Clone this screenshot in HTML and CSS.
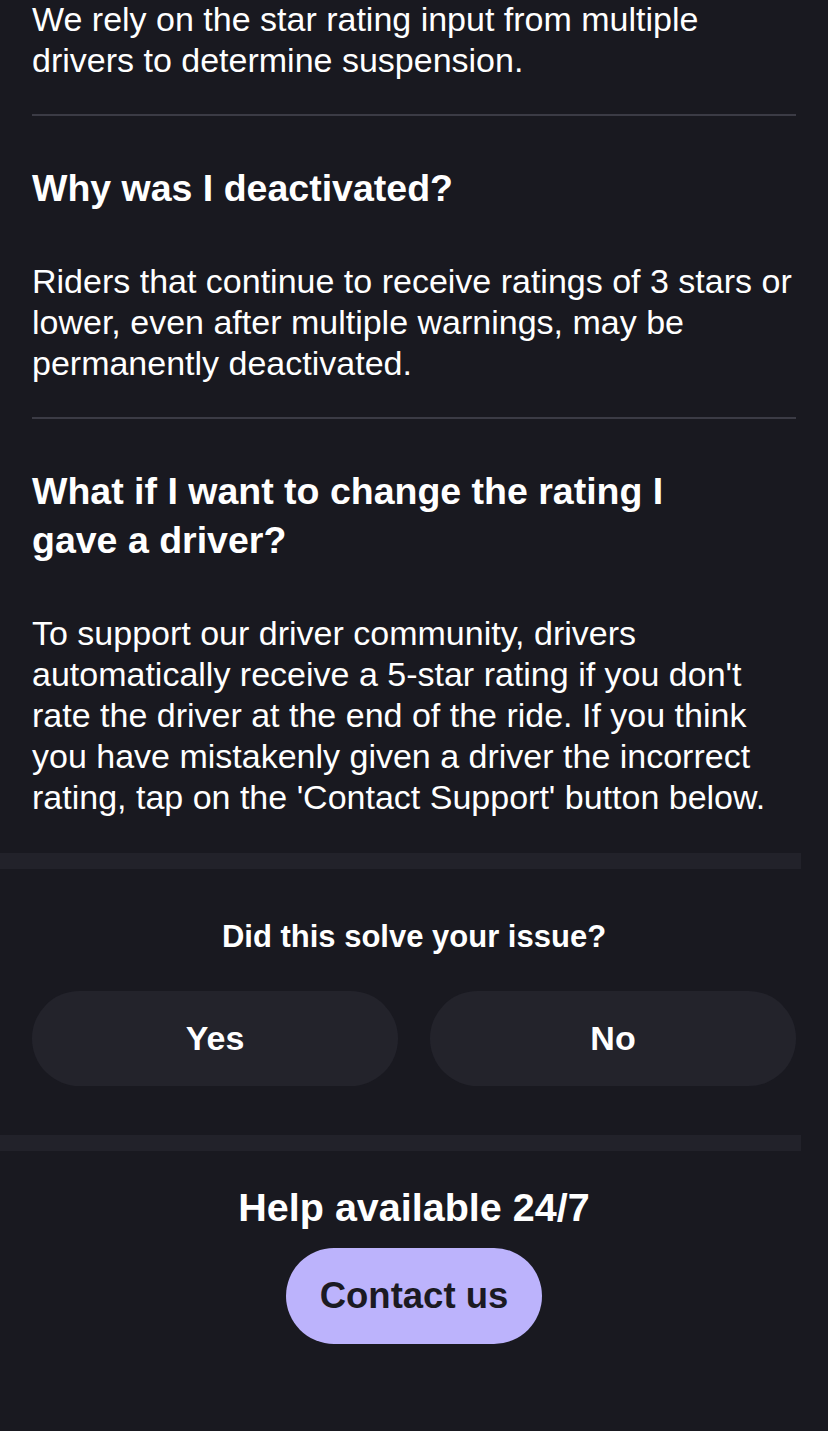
FILE: index.html
```html
<!DOCTYPE html>
<html>
<head>
<meta charset="utf-8">
<link rel="stylesheet" href="styles.css">
</head>
<body>
<main class="page">
  <section class="faq">
    <p class="answer">We rely on the star rating input from multiple drivers to determine suspension.</p>
    <hr class="divider">
    <h2 class="question">Why was I deactivated?</h2>
    <p class="answer">Riders that continue to receive ratings of 3 stars or lower, even after multiple warnings, may be permanently deactivated.</p>
    <hr class="divider">
    <h2 class="question">What if I want to change the rating I gave a driver?</h2>
    <p class="answer">To support our driver community, drivers automatically receive a 5-star rating if you don't rate the driver at the end of the ride. If you think you have mistakenly given a driver the incorrect rating, tap on the 'Contact Support' button below.</p>
  </section>
  <div class="band"></div>
  <section class="feedback">
    <h3 class="feedback-title">Did this solve your issue?</h3>
    <div class="choices">
      <button class="choice">Yes</button>
      <button class="choice">No</button>
    </div>
  </section>
  <div class="band"></div>
  <section class="help">
    <h3 class="help-title">Help available 24/7</h3>
    <button class="contact">Contact us</button>
  </section>
</main>
</body>
</html>
```
FILE: styles.css
```css
html, body {
  margin: 0;
  padding: 0;
  background: #191920;
}
body {
  font-family: "Liberation Sans", Arial, sans-serif;
  color: #ffffff;
}
.page {
  width: 828px;
}
.faq {
  padding: 0 32px 35px;
  margin-top: -1px;
}
.answer {
  margin: 0;
  font-size: 34px;
  line-height: 41px;
  font-weight: 400;
}
.divider {
  border: 0;
  height: 2px;
  background: #3b3b45;
  margin: 33px 0 0;
}
.question {
  margin: 0;
  padding: 48px 48px 48px 0;
  font-size: 37.5px;
  line-height: 49px;
  font-weight: 700;
}
.band {
  width: 801px;
  height: 16px;
  background: #22222a;
}
.feedback {
  padding: 48px 32px 49px;
}
.feedback-title {
  margin: 0;
  text-align: center;
  font-size: 31px;
  line-height: 40px;
  font-weight: 700;
}
.choices {
  display: grid;
  grid-template-columns: 1fr 1fr;
  gap: 32px;
  margin-top: 34px;
}
.choice {
  height: 95px;
  border: 0;
  border-radius: 48px;
  background: #23232b;
  color: #ffffff;
  font-family: inherit;
  font-size: 34px;
  font-weight: 700;
  padding: 0;
}
.help {
  padding: 34px 32px 0;
  display: flex;
  flex-direction: column;
  align-items: center;
}
.help-title {
  margin: 0;
  font-size: 39.5px;
  line-height: 44px;
  font-weight: 700;
}
.contact {
  margin-top: 19px;
  width: 256px;
  height: 96px;
  border: 0;
  border-radius: 48px;
  background: #bcb3fc;
  color: #1b1a22;
  font-family: inherit;
  font-size: 36.5px;
  font-weight: 700;
  padding: 0;
}
```
